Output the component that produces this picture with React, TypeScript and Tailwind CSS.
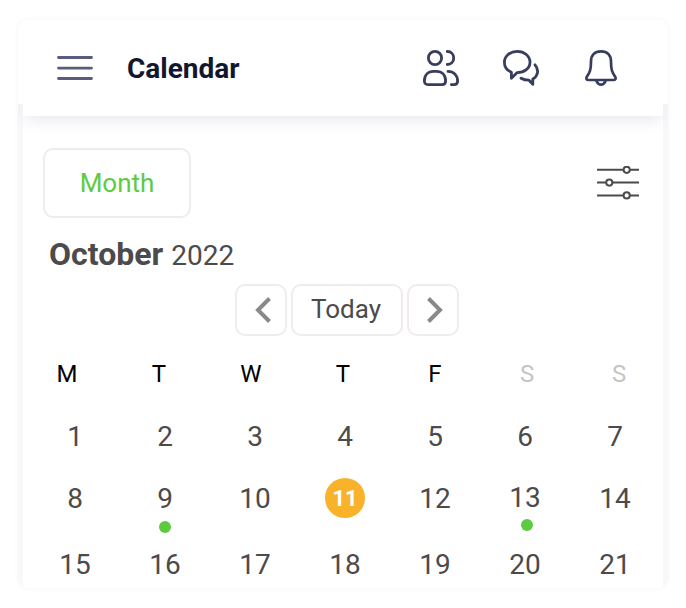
import React from "react";

const weekdays = ["M", "T", "W", "T", "F", "S", "S"];

const weeks = [
  { days: [1, 2, 3, 4, 5, 6, 7], height: "h-[62px]" },
  { days: [8, 9, 10, 11, 12, 13, 14], height: "h-[66px]" },
  { days: [15, 16, 17, 18, 19, 20, 21], height: "h-[40px]" },
];

function MenuIcon() {
  return (
    <svg width="36" height="26" viewBox="0 0 36 26" stroke="#595c7d" strokeWidth="2.8" strokeLinecap="round">
      <path d="M1.5 2.5H34.5M1.5 13.1H34.5M1.5 23.5H34.5" />
    </svg>
  );
}

function PeopleIcon() {
  return (
    <svg width="36" height="36" viewBox="0 0 36 36" fill="none" stroke="#373d5c" strokeWidth="2.8" strokeLinecap="round" strokeLinejoin="round">
      <circle cx="12" cy="8" r="6.6" />
      <path d="M24.3 1.5C28.2 1.5 30.7 4.3 30.7 8S28.2 14.5 24.3 14.5" />
      <path d="M5 34.6C2.6 34.6 1.4 33.2 1.4 31C1.4 25.2 5 21.4 10.5 21.4H13.5C19 21.4 22.6 25.2 22.6 31C22.6 33.2 21.4 34.6 19 34.6Z" />
      <path d="M25 21.4C30.8 21.4 34.6 25.5 34.6 31C34.6 33.4 33.4 34.6 31 34.6H28.3" />
    </svg>
  );
}

function ChatIcon() {
  return (
    <svg width="36" height="36" viewBox="0 0 36 36" fill="none" stroke="#373d5c" strokeWidth="2.8" strokeLinecap="round" strokeLinejoin="round">
      <path d="M8.4 28.3V22.2C4.2 20.4 1.4 16.7 1.4 12.2C1.4 6.2 7 1.4 14.2 1.4S27 6.2 27 12.2C27 18.2 21.5 22.6 14.2 22.6Z" />
      <path d="M32 14.8C36.6 20.2 34.6 26.6 29.8 29V34.4L26 30.2C23 30.2 20.4 29.6 18 28.2" />
    </svg>
  );
}

function BellIcon() {
  return (
    <svg width="32" height="36" viewBox="0 0 32 36" fill="none" stroke="#373d5c" strokeWidth="2.7" strokeLinecap="round" strokeLinejoin="round">
      <path d="M16 1.4C9.4 1.4 6 5.6 6 11.5C6 20 4.8 22.2 2 26.4C.7 28.6 1.5 30 3.8 30H28.2C30.5 30 31.3 28.6 30 26.4C27.2 22.2 26 20 26 11.5C26 5.6 22.6 1.4 16 1.4Z" />
      <path d="M11.5 31C12.5 33.5 14 34.6 16 34.6S19.5 33.5 20.5 31" />
    </svg>
  );
}

function FilterIcon() {
  return (
    <svg width="42" height="34" viewBox="0 0 42 34" fill="white" stroke="#4b4b4b" strokeWidth="2">
      <path d="M0 3.8H42M0 16.6H42M0 29.4H42" />
      <circle cx="29.7" cy="3.8" r="3.1" />
      <circle cx="12.3" cy="16.6" r="3.1" />
      <circle cx="29.7" cy="29.4" r="3.1" />
    </svg>
  );
}

function Day({ day }: { day: number }) {
  if (day === 11) {
    return (
      <div className="-mt-px flex h-10 w-10 items-center justify-center rounded-full bg-[#f8b32b] text-[22px] font-bold text-white">
        {day}
      </div>
    );
  }
  return (
    <div className={`flex flex-col items-center ${day === 13 ? "-mt-px" : ""}`}>
      <span className="h-10 text-[28px] leading-10">{day}</span>
      {day === 9 && <span className="mt-[2px] h-3 w-3 rounded-full bg-[#5dcb41]" />}
      {day === 13 && <span className="mt-px ml-1 h-3 w-3 rounded-full bg-[#5dcb41]" />}
    </div>
  );
}

export default function App() {
  return (
    <div className="h-[608px] w-[686px] overflow-hidden bg-white pt-5 pl-[18px] font-[Roboto,sans-serif] text-[#4b4b4b]">
      <div className="h-[568px] w-[650px] rounded-[10px] bg-[linear-gradient(to_bottom,white_84px,#f1f1f6_84px,#f8f8fb_110px)] shadow-[0_0_5px_rgba(30,30,60,0.05)]">
        <header className="relative mx-[5px] flex h-24 items-center bg-white pr-[46px] pl-[34px] shadow-[0_6px_14px_-2px_rgba(50,50,80,0.11)] [clip-path:inset(0_0_-30px_0)]">
          <MenuIcon />
          <h1 className="mt-0.5 ml-[34px] flex-1 text-[28px] font-bold text-[#12172f]">Calendar</h1>
          <div className="flex">
            <PeopleIcon />
            <div className="mr-[46px] ml-11">
              <ChatIcon />
            </div>
            <BellIcon />
          </div>
        </header>
        <main className="mx-[5px] h-[472px] rounded-b bg-white pt-8">
          <div className="flex h-[70px] items-center justify-between pr-6 pl-5">
            <button className="h-[70px] w-[148px] rounded-[10px] border-2 border-[#f0eced] text-[26px] text-[#5dcb41]">Month</button>
            <FilterIcon />
          </div>
          <h2 className="mt-4 h-10 pl-[26px] text-[32px] leading-10 font-bold">
            October <span className="text-[28px] font-normal">2022</span>
          </h2>
          <div className="mt-[10px] flex h-[52px] justify-center gap-1 pl-2">
            <button className="flex w-[52px] items-center justify-center rounded-[10px] border-2 border-[#f0eced]">
              <svg className="ml-[3px]" width="16" height="26" viewBox="0 0 16 26" fill="none" stroke="#898989" strokeWidth="4">
                <path d="M14.5 1.5L3 13L14.5 24.5" />
              </svg>
            </button>
            <button className="w-28 rounded-[10px] border-2 border-[#f0eced] pr-0.5 pb-0.5 text-[26px]">Today</button>
            <button className="flex w-[52px] items-center justify-center rounded-[10px] border-2 border-[#f0eced]">
              <svg className="ml-1" width="16" height="26" viewBox="0 0 16 26" fill="none" stroke="#898989" strokeWidth="4">
                <path d="M1.5 1.5L13 13L1.5 24.5" />
              </svg>
            </button>
          </div>
          <div className="mt-[18px] ml-[-2px] grid h-10 w-[644px] grid-cols-7 text-center text-2xl leading-10 text-black">
            {weekdays.map((day, i) => (
              <span key={i} className={i > 4 ? "text-[#c4c4c4]" : ""}>{day}</span>
            ))}
          </div>
          <div className="mt-[23px] ml-[7px] w-[630px]">
            {weeks.map((week) => (
              <div key={week.days[0]} className={`grid grid-cols-7 items-start justify-items-center ${week.height}`}>
                {week.days.map((day) => <Day key={day} day={day} />)}
              </div>
            ))}
          </div>
        </main>
      </div>
    </div>
  );
}
